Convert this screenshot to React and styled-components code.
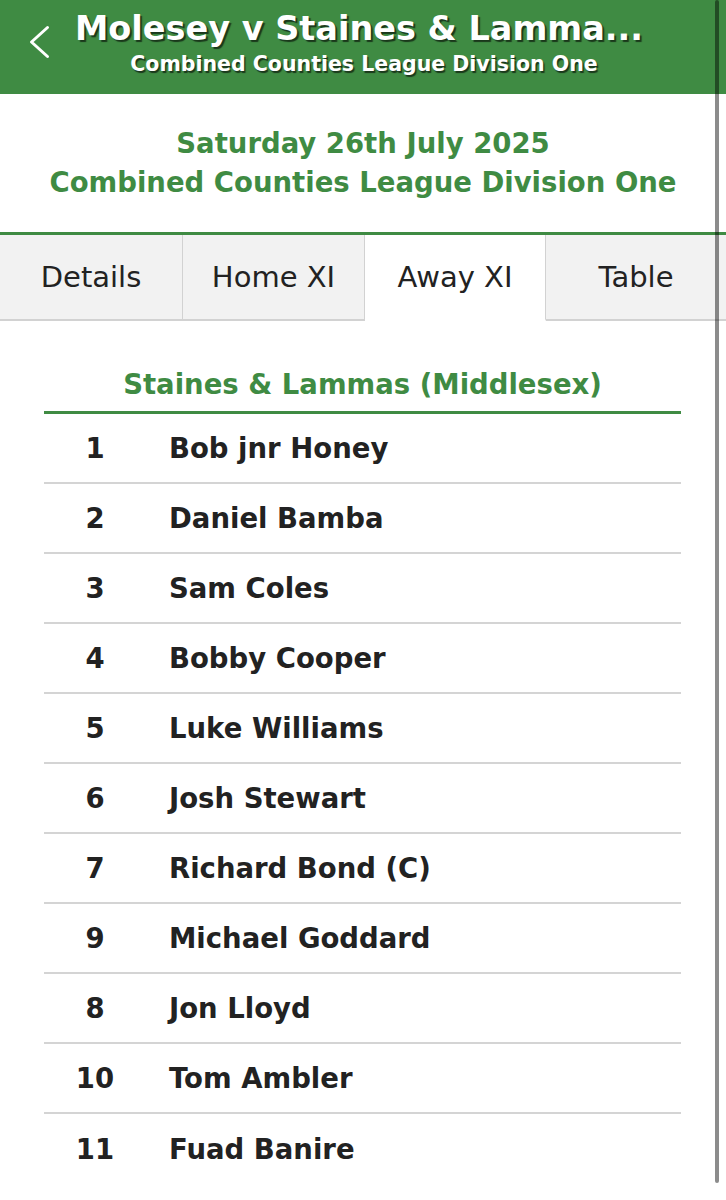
import React from "react";
import styled, { createGlobalStyle } from "styled-components";

const GREEN = "#3f8b43";
const FONT = `"DejaVu Sans", "Open Sans", sans-serif`;

const Global = createGlobalStyle`
  html, body { margin: 0; padding: 0; background: #fff; }
  body { font-family: ${FONT}; color: #222; }
  * { box-sizing: border-box; }
`;

const Page = styled.div`
  width: 726px;
  position: relative;
`;

const Header = styled.header`
  background: ${GREEN};
  height: 94px;
  display: grid;
  grid-template-columns: 75px 1fr 75px;
  padding-top: 8px;
`;

const BackButton = styled.button`
  grid-column: 1;
  align-self: start;
  margin: 17px 0 0 28px;
  padding: 0;
  border: 0;
  background: none;
  width: 22px;
  height: 34px;
  display: flex;
`;

const TitleBlock = styled.div`
  grid-column: 2;
  display: flex;
  flex-direction: column;
  align-items: center;
  color: #fff;
  font-weight: 700;
  white-space: nowrap;
`;

const Title = styled.h1`
  margin: 0;
  padding-right: 10px;
  font-size: 33.5px;
  line-height: 42px;
  font-weight: 700;
  text-shadow: 2px 2px 1px rgba(0, 0, 0, 0.6);
`;

const Subtitle = styled.div`
  font-size: 20.5px;
  line-height: 28px;
  text-shadow: 1.5px 1.5px 1px rgba(0, 0, 0, 0.6);
`;

const Info = styled.section`
  padding: 30px 0;
  text-align: center;
  color: ${GREEN};
  font-weight: 700;
  font-size: 27.5px;
  line-height: 39px;
  border-bottom: 3px solid ${GREEN};
`;

const Tabs = styled.nav`
  display: grid;
  grid-template-columns: 183px 182px 181px 1fr;
  height: 86px;
`;

const Tab = styled.div`
  display: flex;
  align-items: center;
  justify-content: center;
  font-size: 29px;
  color: #222;
  background: ${(p) => (p.$active ? "#fff" : "#f2f2f2")};
  border-bottom: 2px solid ${(p) => (p.$active ? "transparent" : "#d2d2d2")};
  border-right: ${(p) => (p.$last ? "none" : "1.5px solid #d2d2d2")};
`;

const Lineup = styled.section`
  margin: 0 45px 0 44px;
  padding-top: 43px;
`;

const TeamName = styled.h2`
  margin: 0;
  text-align: center;
  color: ${GREEN};
  font-size: 27.5px;
  line-height: 40px;
  font-weight: 700;
  padding-bottom: 7px;
  border-bottom: 3px solid ${GREEN};
`;

const Row = styled.div`
  display: grid;
  grid-template-columns: 102px 1fr;
  align-items: center;
  height: 70px;
  border-bottom: ${(p) => (p.$last ? "none" : "2px solid #d4d4d4")};
  font-size: 27.5px;
  font-weight: 700;
  color: #222;
`;

const Num = styled.span`
  text-align: center;
`;

const Name = styled.span`
  padding-left: 23px;
`;

const ScrollThumb = styled.div`
  position: absolute;
  top: 0;
  right: 7px;
  width: 4px;
  height: 1183px;
  border-radius: 2px;
  background: rgba(0, 0, 0, 0.45);
`;

const players = [
  ["1", "Bob jnr Honey"],
  ["2", "Daniel Bamba"],
  ["3", "Sam Coles"],
  ["4", "Bobby Cooper"],
  ["5", "Luke Williams"],
  ["6", "Josh Stewart"],
  ["7", "Richard Bond (C)"],
  ["9", "Michael Goddard"],
  ["8", "Jon Lloyd"],
  ["10", "Tom Ambler"],
  ["11", "Fuad Banire"],
];

const tabs = ["Details", "Home XI", "Away XI", "Table"];

export default function App() {
  return (
    <Page>
      <Global />
      <Header>
        <BackButton aria-label="Back">
          <svg width="22" height="34" viewBox="0 0 22 34">
            <polyline
              points="19.5,2.5 3.5,17 19.5,31.5"
              fill="none"
              stroke="#fff"
              strokeWidth="3"
              strokeLinecap="round"
              strokeLinejoin="round"
            />
          </svg>
        </BackButton>
        <TitleBlock>
          <Title>Molesey v Staines &amp; Lamma...</Title>
          <Subtitle>Combined Counties League Division One</Subtitle>
        </TitleBlock>
      </Header>
      <Info>
        <div>Saturday 26th July 2025</div>
        <div>Combined Counties League Division One</div>
      </Info>
      <Tabs>
        {tabs.map((t, i) => (
          <Tab key={t} $active={i === 2} $last={i === tabs.length - 1}>
            {t}
          </Tab>
        ))}
      </Tabs>
      <Lineup>
        <TeamName>Staines &amp; Lammas (Middlesex)</TeamName>
        {players.map(([n, name], i) => (
          <Row key={name} $last={i === players.length - 1}>
            <Num>{n}</Num>
            <Name>{name}</Name>
          </Row>
        ))}
      </Lineup>
      <ScrollThumb />
    </Page>
  );
}
